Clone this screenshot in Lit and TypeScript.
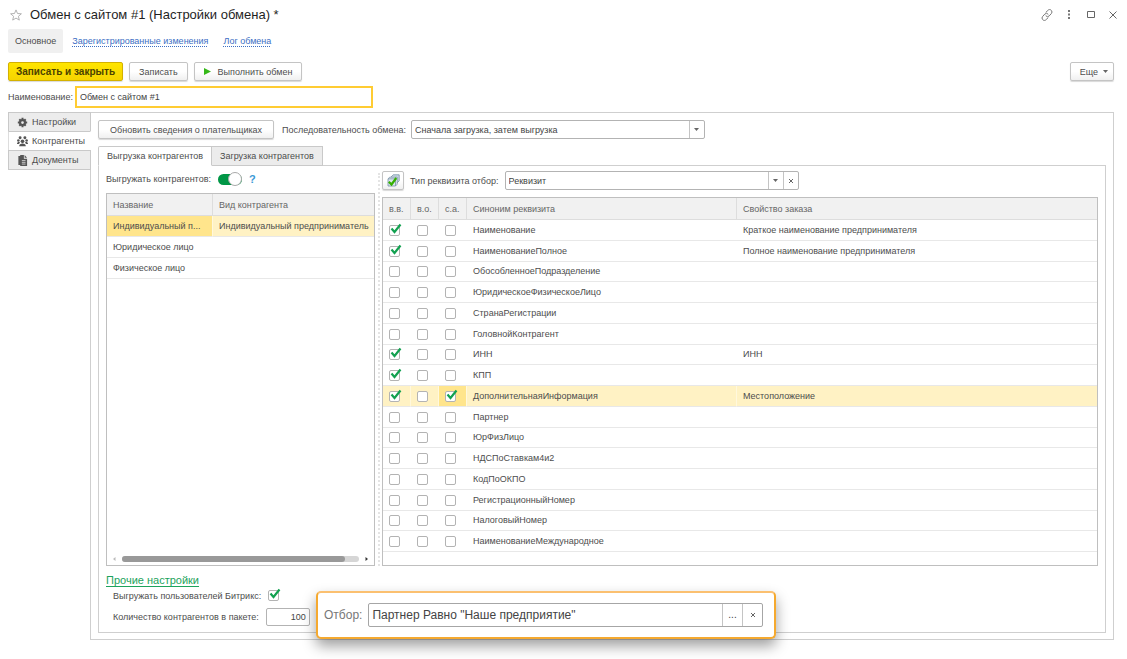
import { LitElement, html, css, svg, nothing } from "lit";
import { customElement, property, state } from "lit/decorators.js";
import { classMap } from "lit/directives/class-map.js";

interface Requisite {
  name: string;
  order: string;
  flags: [boolean, boolean, boolean];
}

const row = (name: string, order = "", vv = false, vo = false, sa = false): Requisite => ({
  name,
  order,
  flags: [vv, vo, sa],
});

const REQUISITES: Requisite[] = [
  row("Наименование", "Краткое наименование предпринимателя", true),
  row("НаименованиеПолное", "Полное наименование предпринимателя", true),
  row("ОбособленноеПодразделение"),
  row("ЮридическоеФизическоеЛицо"),
  row("СтранаРегистрации"),
  row("ГоловнойКонтрагент"),
  row("ИНН", "ИНН", true),
  row("КПП", "", true),
  row("ДополнительнаяИнформация", "Местоположение", true, false, true),
  row("Партнер"),
  row("ЮрФизЛицо"),
  row("НДСПоСтавкам4и2"),
  row("КодПоОКПО"),
  row("РегистрационныйНомер"),
  row("НалоговыйНомер"),
  row("НаименованиеМеждународное"),
];

const FLAG_TITLES = ["в.в.", "в.о.", "с.а."];

const COUNTERPARTIES = [
  ["Индивидуальный п...", "Индивидуальный предприниматель"],
  ["Юридическое лицо", ""],
  ["Физическое лицо", ""],
];

const gear = svg`<svg viewBox="0 0 12 12" width="11" height="11" aria-hidden="true">
  <g fill="none" stroke="#555">
    <circle cx="6" cy="6" r="2.700" stroke-width="2.400"/>
    <path stroke-width="2.200" d="M6 .9v2M6 9.100v2M.9 6h2M9.100 6h2M2.500 2.500l1.200 1.200M8.300 8.300l1.200 1.200M9.500 2.500L8.300 3.700M3.700 8.300L2.500 9.500"/>
  </g></svg>`;

const people = svg`<svg viewBox="0 0 12 12" width="11" height="11" aria-hidden="true">
  <g fill="#555">
    <circle cx="6" cy="5.800" r="2"/><circle cx="3.400" cy="2" r="1.600"/><circle cx="8.600" cy="2" r="1.600"/>
    <circle cx="1.500" cy="5" r="1.400"/><circle cx="10.500" cy="5" r="1.400"/>
    <path d="M2.400 11.200c0-2 1.400-3.100 3.600-3.100s3.600 1.100 3.600 3.100zM0 8.600C0 7.200.8 6.600 2.200 6.600l1.200.5-1.300 1.600zM12 8.600c0-1.400-.8-2-2.200-2l-1.200.5 1.300 1.600z"/>
  </g></svg>`;

const doc = svg`<svg viewBox="0 0 12 12" width="11" height="11" aria-hidden="true">
  <path fill="#555" d="M1.500 1h2.600v10H1.500zM3.500 0h4v4H11v8H3.500z"/>
  <path fill="#555" d="M8.300 0L11 3.100H8.300z"/>
  <path stroke="#ececec" d="M5.300 6.100h4M5.300 8h4M5.300 9.900h4" stroke-width=".8"/></svg>`;

const cross = svg`<svg viewBox="0 0 6 6" width="6" height="6" aria-hidden="true">
  <path d="M1 1l4 4M5 1L1 5" stroke="#666" fill="none"/></svg>`;

const caret = svg`<svg viewBox="0 0 5 3" width="5" height="3" aria-hidden="true">
  <path d="M0 0h5L2.500 3z" fill="#666"/></svg>`;

@customElement("tick-box")
export class TickBox extends LitElement {
  @property({ type: Boolean }) checked = false;
  @property() label = "";

  static styles = css`
    :host { display: inline-block; vertical-align: middle; }
    .wrap { position: relative; display: block; width: 11px; height: 11px; }
    .box {
      appearance: none; display: block; box-sizing: border-box; width: 11px; height: 11px;
      margin: 0; border: 1px solid #b3b3b3; border-radius: 2px; background: #fff;
    }
    .mark { position: absolute; left: 1px; top: -2px; pointer-events: none; }
  `;

  private toggle(e: Event) {
    this.checked = (e.target as HTMLInputElement).checked;
  }

  render() {
    return html`<label class="wrap">
      <input class="box" type="checkbox" aria-label=${this.label} .checked=${this.checked} @change=${this.toggle} />
      ${this.checked
        ? html`<svg class="mark" viewBox="0 0 12 12" width="12" height="12" aria-hidden="true">
            <path d="M1.500 5.500l3 3.500L10.500 1.500" fill="none" stroke="#12a150" stroke-width="2.200" />
          </svg>`
        : nothing}
    </label>`;
  }
}

@customElement("app-root")
export class AppRoot extends LitElement {
  @state() private section = 1;
  @state() private enabled = true;
  @state() private current = 8;

  static styles = css`
    :host {
      display: block; box-sizing: border-box; min-height: 100vh; padding: 0 8px 20px; background: #fff;
      color: #4d4d4d; font: 9px/12px "Liberation Sans", Arial, sans-serif;
    }
    *, *::before { box-sizing: border-box; }
    button, input, select { font: inherit; color: inherit; margin: 0; }
    svg { display: block; flex: none; }
    .grow { flex: 1; }

    .title { display: flex; align-items: center; height: 29px; padding: 0 0 0 2px; }
    .title h1 { margin: 0 0 0 8px; flex: 1; font-size: 13px; line-height: 20px; font-weight: 400; color: #1f1f1f; }
    .tools { display: flex; align-items: center; gap: 10px; }
    .icon { display: flex; align-items: center; justify-content: center; min-width: 12px; height: 16px; padding: 0; border: 0; background: none; }

    .nav { display: flex; height: 24px; align-items: center; }
    .nav a { color: #3c6fc4; text-decoration: underline dotted; text-underline-offset: 2px; margin-right: 15px; }
    .nav .active { height: 24px; padding: 6px 7px; margin-right: 9px; border-radius: 2px; background: #f0f0f0; color: #4d4d4d; text-decoration: none; }

    .commands { display: flex; gap: 6px; padding: 9px 5px 0 0; }
    .btn {
      display: flex; align-items: center; justify-content: center; gap: 7px; height: 19px; padding: 0 9px;
      border: 1px solid #c4c4c4; border-radius: 2px; background: linear-gradient(#fff 50%, #f0f0f0);
      box-shadow: 0 1px 1px #d9d9d9; white-space: nowrap;
    }
    .primary { padding: 0 7px; border-color: #d4b100; background: linear-gradient(#ffe500, #f5d400); font-size: 10px; font-weight: 700; color: #4b4200; }
    .wide { padding: 0 11px; }
    .menu { padding: 0 5px 0 9px; gap: 5px; }

    .name { display: flex; align-items: center; padding-top: 5px; gap: 2px; }
    .name input { width: 298px; height: 22px; padding: 0 3px; border: 2px solid #fc3; outline: 0; background: #fff; color: #444; }

    .body { display: flex; align-items: flex-start; padding: 4px 5px 0 0; }
    .side { display: flex; flex-direction: column; width: 83px; flex: none; margin-right: -1px; z-index: 1; }
    .side button {
      display: flex; align-items: center; gap: 4px; height: 20px; margin-bottom: -1px; padding: 0 8px; text-align: left;
      border: 1px solid #c9c9c9; background: #ececec;
    }
    .side .on { background: #fff; border-right-color: #fff; border-left-color: #ddd; }
    .main { flex: 1; min-width: 0; padding: 7px 7px 6px; border: 1px solid #cfcfcf; }

    .row { display: flex; align-items: center; }
    .main > .row > label { margin: 0 5px 0 8px; }
    .field { display: flex; height: 19px; border: 1px solid #b3b3b3; border-radius: 2px; background: #fff; color: #444; }
    .field select, .field input {
      appearance: none; flex: 1; min-width: 0; padding: 0 3px; border: 0; outline: 0; background: none; height: 100%;
    }
    .field .cell {
      display: flex; align-items: center; justify-content: center; width: 15px; padding: 0;
      border: 0; border-left: 1px solid #c4c4c4; background: none;
    }
    .list-field { width: 294px; }

    .tabs { display: flex; padding-top: 7px; }
    .tabs button { height: 20px; margin-bottom: -1px; padding: 0 8px; border: 1px solid #c9c9c9; background: #ececec; }
    .tabs .on { background: #fff; border-bottom-color: #fff; z-index: 1; border-radius: 2px 0 0 0; }
    .tabs button + button { margin-left: -1px; }
    .pane { border: 1px solid #cfcfcf; padding: 5px 7px 6px; }

    .columns { display: flex; }
    .left { width: 269px; flex: none; display: flex; flex-direction: column; }
    .split { width: 7px; flex: none; margin-top: 2px; display: flex; justify-content: center; }
    .split::before { content: ""; border-left: 2px dotted #e4e4e4; }
    .right { flex: 1; min-width: 0; }
    .left .row { height: 16px; margin-bottom: 6px; gap: 7px; }
    .right .row { height: 19px; margin-bottom: 7px; gap: 6px; }
    .help { font-weight: 700; color: #3b9ad6; font-size: 11px; background: none; border: 0; padding: 0; }
    .pick { width: 22px; padding: 0; }
    .switch {
      appearance: none; width: 24px; height: 11px; border-radius: 6px; background: #009646; display: flex;
      align-items: center; justify-content: flex-end;
    }
    .switch::before { content: ""; width: 14px; height: 14px; flex: none; border: 1px solid #aaa; border-radius: 7px; background: #fff; }
    .switch.off { background: #bbb; justify-content: flex-start; }

    .list { border: 1px solid #bfbfbf; overflow: hidden; display: flex; flex-direction: column; }
    .left .list { flex: 1; }
    .right .list { padding-bottom: 13px; }
    table { width: 100%; border-collapse: separate; border-spacing: 0; table-layout: fixed; }
    th, td { padding: 0 0 0 6px; text-align: left; font-weight: 400; white-space: nowrap; overflow: hidden; }
    th { height: 22px; background: #f1f1f1; border-right: 1px solid #ddd; border-bottom: 1px solid #ddd; color: #666; }
    th:last-child { border-right: 0; }
    td { height: 20px; border-bottom: 1px solid #e8e8e8; }
    .left td { height: 21px; }
    .attrs { height: 354px; }
    .selected td { background: #fff2c4; border-right: 1px solid #fff8dd; }
    .selected td:last-child { border-right: 0; }
    .selected td.cursor { background: #ffe58c; }
    .w-name { width: 106px; }
    .w-flag { width: 28px; }
    .w-syn { width: 270px; }

    .scroll { display: flex; align-items: center; gap: 6px; height: 12px; margin: auto 5px 0; }
    .scroll button { border: 0; padding: 0; background: none; }
    .track { flex: 1; height: 6px; border-radius: 3px; background: #d6d6d6; }
    .thumb { width: 94%; height: 6px; border-radius: 3px; background: #999; }

    .more { padding-top: 8px; }
    .more a { color: #1da35c; font-size: 11px; line-height: 13px; text-decoration: underline; text-underline-offset: 2px; }
    .more .row { padding-left: 7px; gap: 7px; height: 17px; }
    .more .count { height: 18px; margin-top: 4px; }
    .count .field { width: 44px; height: 18px; }
    .count input { text-align: right; }

    .wrap { position: relative; }
    .popup {
      position: absolute; left: 225px; bottom: 0; display: flex; align-items: center; gap: 6px;
      width: 460px; height: 48px; padding: 0 11px 0 6px; border: 2px solid #f5a92f; border-top-color: #fbc070;
      border-radius: 5px; background: #fff; box-shadow: 0 7px 14px rgba(0, 0, 0, 0.38); font-size: 12px; color: #777; z-index: 2;
    }
    .popup .field { flex: 1; height: 24px; border-color: #a6a6a6; color: #444; }
    .popup .cell { width: 20px; font-size: 10px; }
  `;

  private field(id: string, value: string, clear = false) {
    return html`<div class="field list-field">
      <select id=${id}><option>${value}</option></select>
      <button class="cell" aria-label="Открыть список">${caret}</button>
      ${clear ? html`<button class="cell" aria-label="Очистить">${cross}</button>` : nothing}
    </div>`;
  }

  private counterparties() {
    return html`<table>
      <colgroup><col class="w-name" /><col /></colgroup>
      <thead><tr><th>Название</th><th>Вид контрагента</th></tr></thead>
      <tbody>
        ${COUNTERPARTIES.map(
          ([name, kind], i) => html`<tr class=${classMap({ selected: i === 0 })}>
            <td class=${classMap({ cursor: i === 0 })}>${name}</td><td>${kind}</td>
          </tr>`
        )}
      </tbody>
    </table>`;
  }

  private requisites() {
    return html`<table class="attrs">
      <colgroup><col class="w-flag" /><col class="w-flag" /><col class="w-flag" /><col class="w-syn" /><col /></colgroup>
      <thead><tr>${FLAG_TITLES.map((t) => html`<th>${t}</th>`)}<th>Синоним реквизита</th><th>Свойство заказа</th></tr></thead>
      <tbody>
        ${REQUISITES.map(
          (r, i) => html`<tr class=${classMap({ selected: i === this.current })} @click=${() => (this.current = i)}>
            ${r.flags.map(
              (f, n) => html`<td class=${classMap({ cursor: i === this.current && n === 2 })}>
                <tick-box .checked=${f} .label=${FLAG_TITLES[n] + " " + r.name}></tick-box>
              </td>`
            )}
            <td>${r.name}</td><td>${r.order}</td>
          </tr>`
        )}
      </tbody>
    </table>`;
  }

  render() {
    const sections = [
      { icon: gear, text: "Настройки" },
      { icon: people, text: "Контрагенты" },
      { icon: doc, text: "Документы" },
    ];
    return html`
      <header class="title">
        <button class="icon" aria-label="В избранное">
          <svg viewBox="0 0 12 12" width="12" height="12">
            <path d="M6 .9l1.500 3.600 3.900.3-3 2.500.9 3.800L6 9.100l-3.300 2 .9-3.800-3-2.500 3.900-.3z" fill="none" stroke="#aaa" stroke-width=".9" />
          </svg>
        </button>
        <h1>Обмен с сайтом #1 (Настройки обмена) *</h1>
        <div class="tools">
          <button class="icon" aria-label="Ссылка">
            <svg viewBox="0 0 12 12" width="12" height="12">
              <g fill="none" stroke="#777" stroke-linecap="round">
                <path d="M5 3.200L6.800 1.500a2.200 2.200 0 0 1 3.600 0 2.300 2.300 0 0 1 0 3L8.200 6.900a2.200 2.200 0 0 1-3.200.1" />
                <path d="M7 8.800L5.200 10.500a2.200 2.200 0 0 1-3.600 0 2.300 2.300 0 0 1 0-3L3.800 5.100A2.200 2.200 0 0 1 7 5" />
              </g>
            </svg>
          </button>
          <button class="icon" aria-label="Меню">
            <svg viewBox="0 0 2 9" width="2" height="9"><path d="M0 0h2v2H0zM0 3.500h2v2H0zM0 7h2v2H0z" fill="#777" /></svg>
          </button>
          <button class="icon" aria-label="Развернуть">
            <svg viewBox="0 0 8 7" width="8" height="7"><path d="M.5.5h7v6h-7z" fill="none" stroke="#666" /></svg>
          </button>
          <button class="icon" aria-label="Закрыть">
            <svg viewBox="0 0 8 8" width="8" height="8"><path d="M.5.5l7 7M7.500.5l-7 7" fill="none" stroke="#666" /></svg>
          </button>
        </div>
      </header>

      <nav class="nav">
        <a class="active" href="#main">Основное</a>
        <a href="#changes">Зарегистрированные изменения</a>
        <a href="#log">Лог обмена</a>
      </nav>

      <div class="commands">
        <button class="btn primary">Записать и закрыть</button>
        <button class="btn">Записать</button>
        <button class="btn">
          <svg viewBox="0 0 7 7" width="7" height="7"><path d="M0 0l7 3.500L0 7z" fill="#35b818" /></svg>Выполнить обмен
        </button>
        <span class="grow"></span>
        <button class="btn menu">Еще ${caret}</button>
      </div>

      <div class="name">
        <label for="name">Наименование:</label>
        <input id="name" type="text" value="Обмен с сайтом #1" />
      </div>

      <div class="body">
        <div class="side">
          ${sections.map(
            (s, i) => html`<button class=${classMap({ on: i === this.section })} @click=${() => (this.section = i)}>
              ${s.icon}${s.text}
            </button>`
          )}
        </div>
        <main class="main wrap">
          <div class="row">
            <button class="btn wide">Обновить сведения о плательщиках</button>
            <label for="sequence">Последовательность обмена:</label>
            ${this.field("sequence", "Сначала загрузка, затем выгрузка")}
          </div>
          <div class="tabs">
            <button class="on">Выгрузка контрагентов</button>
            <button>Загрузка контрагентов</button>
          </div>
          <section class="pane">
            <div class="columns">
              <div class="left">
                <div class="row">
                  <label for="enabled">Выгружать контрагентов:</label>
                  <input id="enabled" type="checkbox" role="switch" class=${classMap({ switch: true, off: !this.enabled })}
                    .checked=${this.enabled} @change=${() => (this.enabled = !this.enabled)} />
                  <button class="help">?</button>
                </div>
                <div class="list">
                  ${this.counterparties()}
                  <div class="scroll">
                    <button aria-label="Влево"><svg viewBox="0 0 4 6" width="4" height="6"><path d="M3.500 1v4L1 3z" fill="#bbb" /></svg></button>
                    <div class="track"><div class="thumb"></div></div>
                    <button aria-label="Вправо"><svg viewBox="0 0 4 6" width="4" height="6"><path d="M.5 1v4L3 3z" fill="#333" /></svg></button>
                  </div>
                </div>
              </div>
              <div class="split"></div>
              <div class="right">
                <div class="row">
                  <button class="btn pick" aria-label="Установить флажки">
                    <svg viewBox="0 0 13 13" width="13" height="13">
                      <path d="M3.800 3.200L6.200.8h6v6L9.800 9.200" fill="#c9d8e2" stroke="#7590a5" stroke-width=".8" />
                      <path d="M1 4.800L2.800 3.200h7.400v7L8.500 12" fill="#eef3f7" stroke="#7590a5" stroke-width=".8" />
                      <path d="M1 4.800h7.500V12H1z" fill="#dce7ee" stroke="#7590a5" stroke-width=".8" />
                      <path d="M1.800 7.800l2.700 2.700L9.300 4" fill="none" stroke="#35b000" stroke-width="2.200" />
                    </svg>
                  </button>
                  <label for="kind">Тип реквизита отбор:</label>
                  ${this.field("kind", "Реквизит", true)}
                </div>
                <div class="list">${this.requisites()}</div>
              </div>
            </div>
            <div class="more">
              <a href="#other">Прочие настройки</a>
              <div class="row">
                <span>Выгружать пользователей Битрикс:</span>
                <tick-box .checked=${true} .label=${"Выгружать пользователей Битрикс"}></tick-box>
              </div>
              <div class="row count">
                <label for="count">Количество контрагентов в пакете:</label>
                <div class="field"><input id="count" type="text" inputmode="numeric" value="100" /></div>
              </div>
            </div>
          </section>
          <div class="popup">
            <label for="filter">Отбор:</label>
            <div class="field">
              <input id="filter" type="text" value='Партнер Равно "Наше предприятие"' />
              <button class="cell" aria-label="Выбрать">...</button>
              <button class="cell" aria-label="Очистить">${cross}</button>
            </div>
          </div>
        </main>
      </div>
    `;
  }
}
